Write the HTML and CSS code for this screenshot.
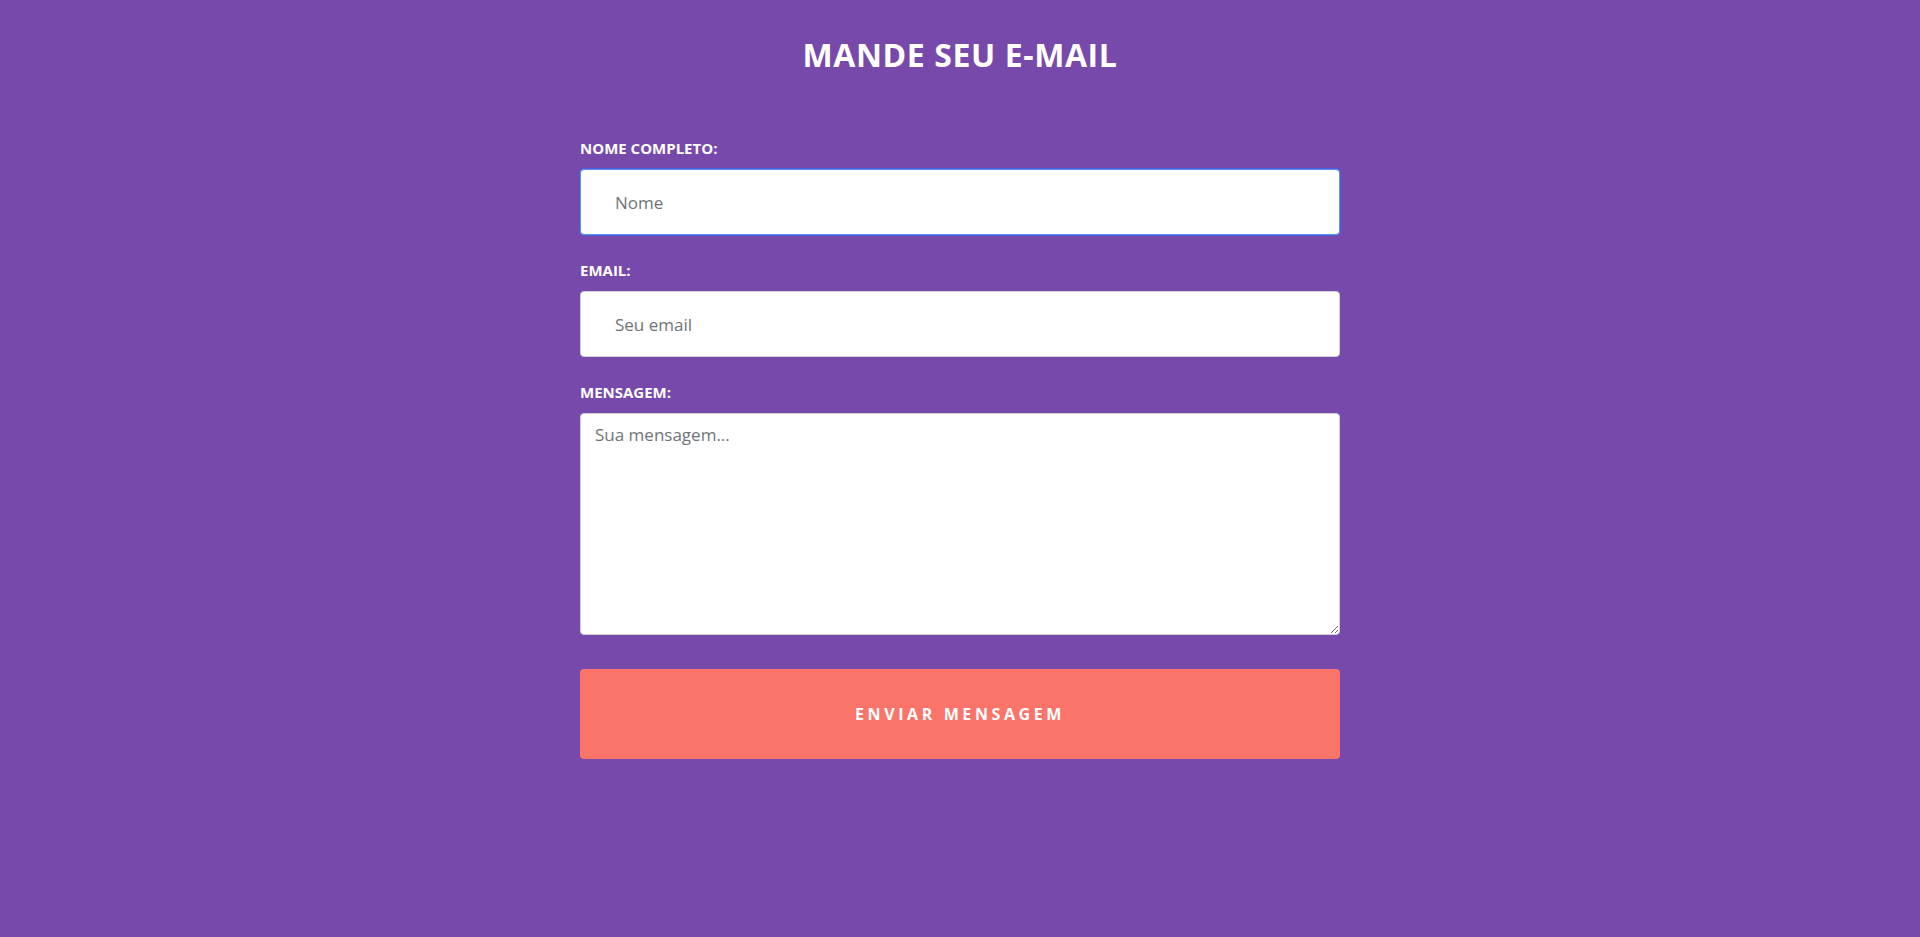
FILE: index.html
```html
<!DOCTYPE html>
<html lang="pt-BR">
<head>
<meta charset="utf-8">
<title>Mande seu e-mail</title>
<link rel="stylesheet" href="styles.css">
</head>
<body>
<main class="page">
  <h1 class="title">MANDE SEU E-MAIL</h1>
  <form class="form">
    <div class="field">
      <label class="label" for="nome">NOME COMPLETO:</label>
      <input class="input is-focused" id="nome" type="text" placeholder="Nome" autofocus>
    </div>
    <div class="field">
      <label class="label" for="email">EMAIL:</label>
      <input class="input" id="email" type="email" placeholder="Seu email">
    </div>
    <div class="field">
      <label class="label" for="msg">MENSAGEM:</label>
      <textarea class="textarea" id="msg" placeholder="Sua mensagem..."></textarea>
    </div>
    <button class="button" type="submit">ENVIAR MENSAGEM</button>
  </form>
</main>
</body>
</html>
```

FILE: styles.css
```css
html, body {
  margin: 0;
  padding: 0;
  background: #7749ab;
  font-family: "Open Sans", "Noto Sans", sans-serif;
}

.page {
  padding-top: 33px;
  display: flex;
  flex-direction: column;
  align-items: center;
}

.title {
  margin: 0 0 61px;
  font-size: 32px;
  line-height: 44px;
  font-weight: 700;
  color: #ffffff;
  letter-spacing: 0.6px;
}

.form {
  width: 760px;
  display: flex;
  flex-direction: column;
}

.field {
  display: flex;
  flex-direction: column;
  margin-bottom: 25px;
}

.label {
  font-size: 15px;
  line-height: 20px;
  font-weight: 700;
  color: #ffffff;
  margin-bottom: 11px;
}

.input,
.textarea {
  box-sizing: border-box;
  width: 100%;
  border: 1px solid #cfcfd6;
  border-radius: 4px;
  background: #ffffff;
  font-family: "Open Sans", "Noto Sans", sans-serif;
  font-size: 17px;
  color: #333333;
  outline: none;
}

.input {
  height: 66px;
  padding: 0 34px;
}

.input.is-focused,
.input:focus {
  border-color: #5f8ef0;
  box-shadow: 0 0 0 1px #4a5fd6;
}

.textarea {
  height: 222px;
  padding: 9px 14px;
  resize: vertical;
}

.input::placeholder,
.textarea::placeholder {
  color: #6f7478;
}

.button {
  margin-top: 9px;
  height: 90px;
  border: none;
  border-radius: 4px;
  background: #fb746a;
  color: #ffffff;
  font-family: "Open Sans", "Noto Sans", sans-serif;
  font-size: 16px;
  font-weight: 700;
  letter-spacing: 3.6px;
  cursor: pointer;
}
```
